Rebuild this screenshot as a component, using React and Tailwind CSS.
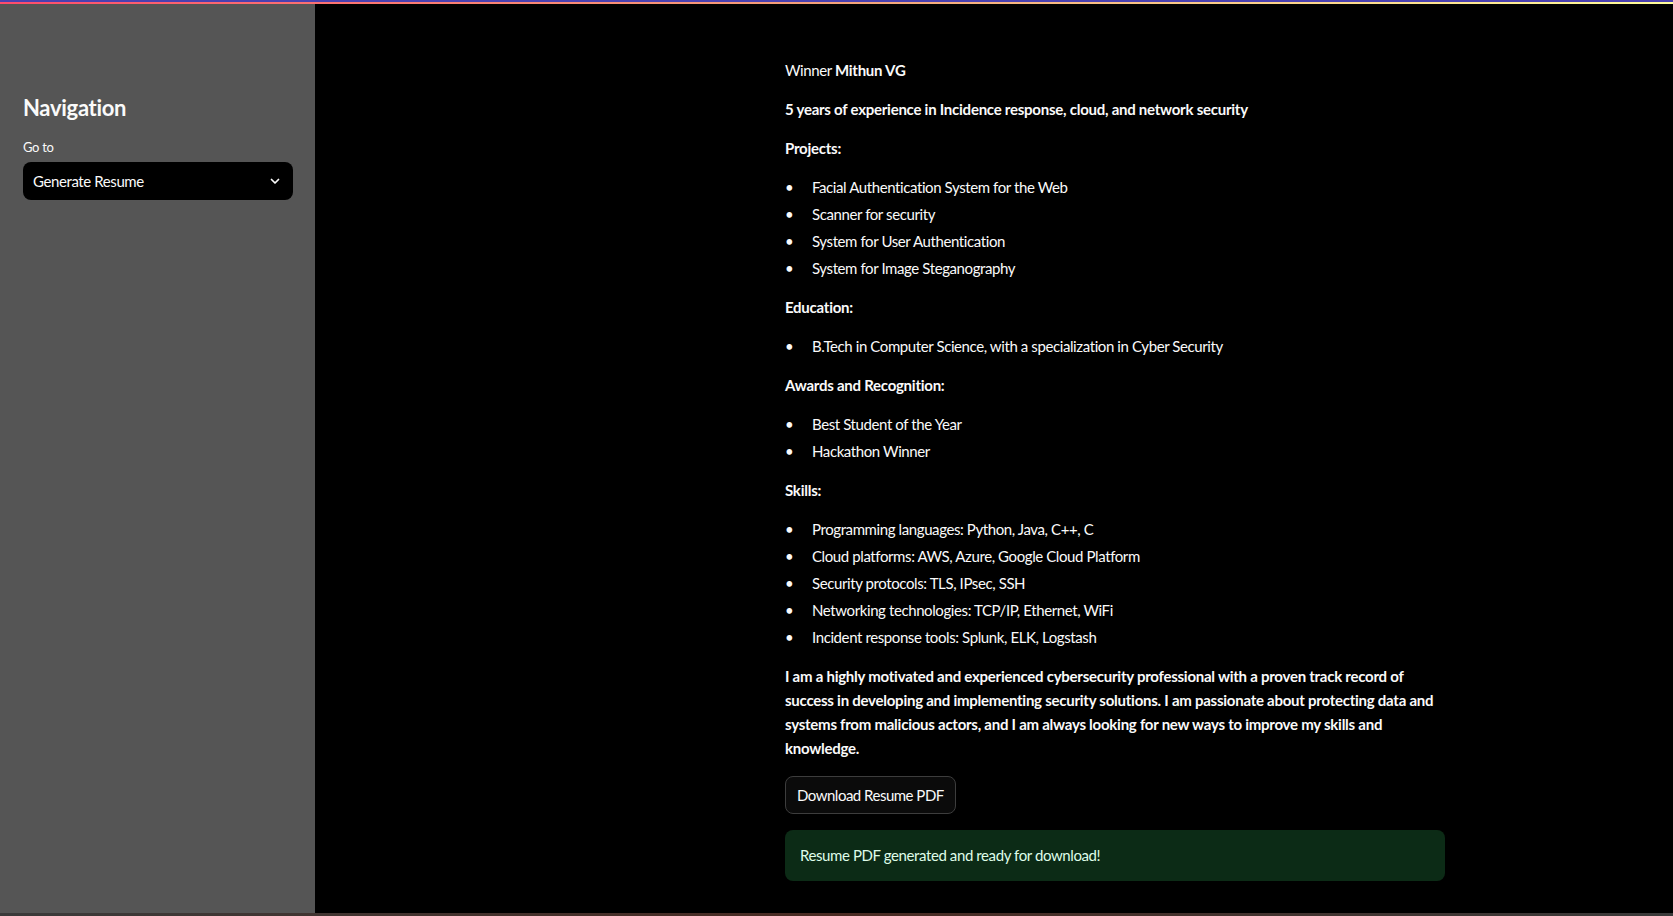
import React from "react";

const font = { fontFamily: "Lato, 'Noto Sans', sans-serif" };

function Bullets({ items }) {
  return (
    <ul className="mb-[15px]">
      {items.map((t) => (
        <li key={t} className="flex leading-[24px] mb-[3px]">
          <span className="w-[27px] shrink-0">•</span>
          <span>{t}</span>
        </li>
      ))}
    </ul>
  );
}

function H({ children }) {
  return <p className="font-bold tracking-[-0.25px] leading-[24px] mb-[15px]">{children}</p>;
}

export default function App() {
  return (
    <div className="h-[916px] w-full flex flex-col bg-black text-[#fafafa] overflow-hidden" style={font}>
      <div className="h-[2px] bg-[#4a40b0]" />
      <div className="h-[2px] bg-gradient-to-r from-[#ff4b6b] via-[#f4a27a] to-[#fffd9a]" />
      <div className="flex flex-1 min-h-0">
        <aside className="w-[315px] shrink-0 bg-[#555555] px-[23px] pt-[89px]">
          <h2 className="text-[22px] font-bold tracking-[-0.3px] leading-[30px] text-[#fafafa]">Navigation</h2>
          <div className="mt-[15px] text-[13px] tracking-[-0.3px] leading-[18px]">Go to</div>
          <div className="mt-[6px] h-[38px] w-[270px] rounded-lg bg-black flex items-center justify-between pl-[10px] pr-[12px] text-[15px] tracking-[-0.4px]">
            <span>Generate Resume</span>
            <svg width="12" height="12" viewBox="0 0 24 24" fill="none" stroke="#fafafa" strokeWidth="3.5" strokeLinecap="round" strokeLinejoin="round">
              <path d="M5 9l7 7 7-7" />
            </svg>
          </div>
        </aside>
        <main className="flex-1 pl-[470px] pt-[54px] text-[15px] tracking-[-0.4px]">
          <div className="w-[660px]">
            <p className="leading-[24px] mb-[15px]">Winner <b className="tracking-[-0.25px]">Mithun VG</b></p>
            <H>5 years of experience in Incidence response, cloud, and network security</H>
            <H>Projects:</H>
            <Bullets items={["Facial Authentication System for the Web", "Scanner for security", "System for User Authentication", "System for Image Steganography"]} />
            <H>Education:</H>
            <Bullets items={["B.Tech in Computer Science, with a specialization in Cyber Security"]} />
            <H>Awards and Recognition:</H>
            <Bullets items={["Best Student of the Year", "Hackathon Winner"]} />
            <H>Skills:</H>
            <Bullets items={["Programming languages: Python, Java, C++, C", "Cloud platforms: AWS, Azure, Google Cloud Platform", "Security protocols: TLS, IPsec, SSH", "Networking technologies: TCP/IP, Ethernet, WiFi", "Incident response tools: Splunk, ELK, Logstash"]} />
            <p className="font-bold tracking-[-0.25px] leading-[24px] mb-[16px]">
              <span className="block whitespace-nowrap">I am a highly motivated and experienced cybersecurity professional with a proven track record of</span>
              <span className="block whitespace-nowrap">success in developing and implementing security solutions. I am passionate about protecting data and</span>
              <span className="block whitespace-nowrap">systems from malicious actors, and I am always looking for new ways to improve my skills and</span>
              <span className="block whitespace-nowrap">knowledge.</span>
            </p>
            <button className="h-[38px] px-[11px] rounded-lg border border-[#3d3d3d] bg-[#0b0b0b] text-[15px] tracking-[-0.5px] text-[#fafafa]">
              Download Resume PDF
            </button>
            <div className="mt-[16px] h-[51px] rounded-lg bg-[#0c2b16] text-[#dffde9] flex items-center px-[15px]">
              Resume PDF generated and ready for download!
            </div>
          </div>
        </main>
      </div>
      <div className="h-[3px] bg-gradient-to-r from-[#3a3a3a] via-[#4a2a22] to-[#3a3a3a]" />
    </div>
  );
}
